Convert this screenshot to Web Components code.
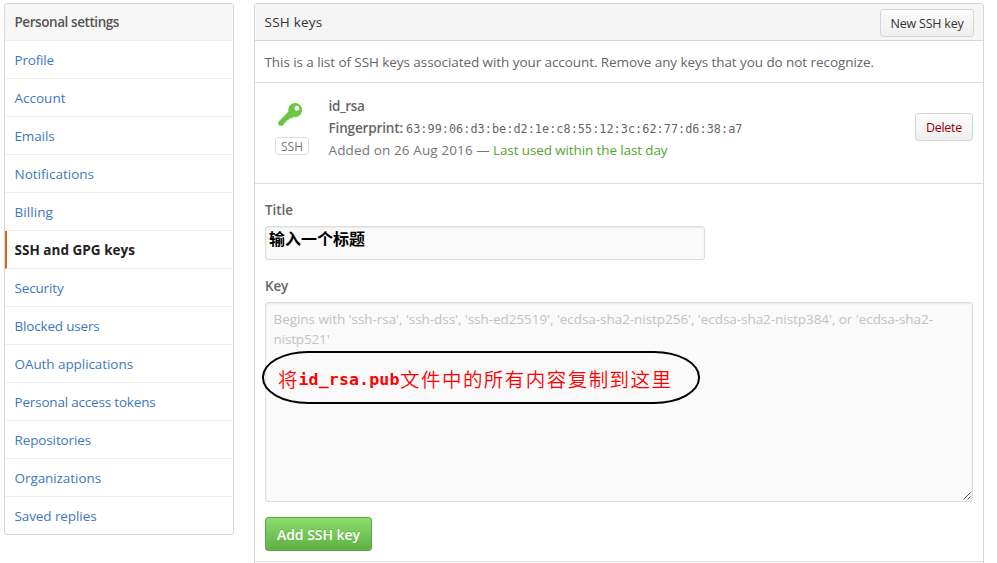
<!DOCTYPE html>
<html lang="en">
<head>
<meta charset="utf-8">
<title>SSH keys</title>
<style>
  html, body { margin: 0; background: #fff; }
  body { height: 563px; overflow: hidden; font: 13.5px/20px "Open Sans", "Noto Sans", sans-serif; color: #666; }
</style>
</head>
<body>
<settings-page>
  <side-menu slot="side" heading="Personal settings">
    <menu-entry><tracked-text width="39.5">Profile</tracked-text></menu-entry>
    <menu-entry><tracked-text width="51">Account</tracked-text></menu-entry>
    <menu-entry><tracked-text width="40">Emails</tracked-text></menu-entry>
    <menu-entry><tracked-text width="79.5">Notifications</tracked-text></menu-entry>
    <menu-entry><tracked-text width="38.5">Billing</tracked-text></menu-entry>
    <menu-entry current><tracked-text width="120.5">SSH and GPG keys</tracked-text></menu-entry>
    <menu-entry><tracked-text width="49">Security</tracked-text></menu-entry>
    <menu-entry><tracked-text width="85">Blocked users</tracked-text></menu-entry>
    <menu-entry><tracked-text width="118.5">OAuth applications</tracked-text></menu-entry>
    <menu-entry><tracked-text width="141">Personal access tokens</tracked-text></menu-entry>
    <menu-entry><tracked-text width="76.5">Repositories</tracked-text></menu-entry>
    <menu-entry><tracked-text width="86.5">Organizations</tracked-text></menu-entry>
    <menu-entry><tracked-text width="82">Saved replies</tracked-text></menu-entry>
  </side-menu>
  <keys-panel>
    <tracked-text slot="heading" width="58">SSH keys</tracked-text>
    <push-button slot="action" style="--w:94px"><tracked-text width="73">New SSH key</tracked-text></push-button>
    <tracked-text slot="intro" width="609.5">This is a list of SSH keys associated with your account. Remove any keys that you do not recognize.</tracked-text>
    <key-row slot="row"></key-row>
    <key-form slot="form"></key-form>
  </keys-panel>
</settings-page>

<script>
const define = (name, html, setup) => customElements.define(name, class extends HTMLElement {
  connectedCallback() {
    if (this.shadowRoot) return;
    this.attachShadow({ mode: 'open' }).innerHTML = html;
    if (setup) setup(this);
  }
});

define('settings-page', `
  <style>:host{display:grid;grid-template-columns:230px 730px;column-gap:20px;padding:3px 0 0 4px;align-items:start}</style>
  <slot name="side"></slot><slot></slot>`);

define('side-menu', `
  <style>
    :host{display:block;border:1px solid #d8d8d8;border-radius:3px;overflow:hidden}
    h2{margin:0;height:36px;padding-left:9.5px;background:#f7f7f7;border-bottom:1px solid #eee;font-size:13.5px;line-height:37px;font-weight:650;color:#555}
    ::slotted(menu-entry:last-child){--line:0px}
  </style>
  <h2><tracked-text width="104.5"></tracked-text></h2><slot></slot>`,
  el => el.shadowRoot.querySelector('tracked-text').textContent = el.getAttribute('heading'));

define('menu-entry', `
  <style>
    :host{display:block;height:37px;padding-left:9.5px;line-height:38px;color:#4078c0;border-bottom:var(--line,1px) solid #eee}
    :host([current]){font-weight:700;color:#222;padding-left:7.5px;border-left:2px solid #d26911}
  </style><slot></slot>`);

/* Text whose letter-spacing is tuned so that it spans a given width. */
define('tracked-text', `<style>:host{display:inline-block;white-space:nowrap}</style><slot></slot>`);

define('push-button', `
  <style>
    :host{display:block;box-sizing:border-box;width:var(--w);height:28px;border:1px solid #d5d5d5;border-radius:3px;
      background:linear-gradient(#fcfcfc,#eee);text-align:center;line-height:27px;font-size:12.5px;font-weight:500;color:#333}
    :host([danger]){color:#900}
    :host([primary]){height:34px;line-height:33px;font-size:14px;font-weight:600;color:#fff;border-color:#5ca941;
      background:linear-gradient(#8add6d,#60b044);text-shadow:0 -1px 0 rgba(0,0,0,.15)}
  </style><slot></slot>`);

define('keys-panel', `
  <style>
    :host{display:block;border:1px solid #d8d8d8;border-radius:3px 3px 0 0;height:570px;box-sizing:border-box}
    header{display:flex;justify-content:space-between;align-items:center;height:36px;padding:0 9px 0 9.5px;
      background:#f5f5f5;border-bottom:1px solid #d8d8d8;color:#333;font-weight:500;border-radius:2px 2px 0 0}
    ::slotted([slot=action]){position:relative;top:1px}
    p{margin:0;height:41px;padding-left:9.5px;line-height:42px;border-bottom:1px solid #ddd}
  </style>
  <header><slot name="heading"></slot><slot name="action"></slot></header>
  <p><slot name="intro"></slot></p><slot name="row"></slot><slot name="form"></slot>`);

define('key-row', `
  <style>
    :host{display:grid;grid-template-columns:34px 1fr 58px;column-gap:20px;height:88px;padding:12px 10px 0 20px;border-bottom:1px solid #ddd}
    .kind{display:flex;flex-direction:column;align-items:center;padding-top:8px;box-sizing:border-box}
    svg{display:block;width:24px;height:23px;margin-right:5px}
    .badge{box-sizing:border-box;width:34px;height:18px;margin-top:11px;border:1px solid #ddd;border-radius:3px;
      text-align:center;font-size:12px;line-height:17px;color:#767676}
    .text{margin-left:-.5px}
    .line{height:22px;line-height:23px;display:flex;align-items:baseline}
    b{font-weight:550} code{font:11.8px/22px "DejaVu Sans Mono",monospace;margin-left:3px}
    .meta{color:#767676}.used{color:#55a532;margin-left:3px}
    push-button{margin-top:18px}
  </style>
  <div class="kind">
    <svg viewBox="0 1 14 13.2" preserveAspectRatio="none"><path fill="#6cc644" fill-rule="evenodd" d="M12.83 2.17C12.08 1.42 11.14 1.03 10 1c-1.13.03-2.08.42-2.83 1.17S6.04 3.86 6.01 5c0 .3.03.59.09.89L.4 11.6C-.1 12.1 0 12.6.1 13c.3.7.8 1.1 1.5 1.1h.9c.6-.1.8-.4 1-.9l.3-.8.9-.3.3-1 1.1-.3.4-.9 1.5-.1L9.09 8.89c.3.08.59.11.91.11 1.14-.03 2.08-.42 2.83-1.17S13.97 6.14 14 5c-.03-1.14-.42-2.08-1.17-2.83zM11 5.38c-.77 0-1.38-.61-1.38-1.38 0-.77.61-1.38 1.38-1.38.77 0 1.38.61 1.38 1.38 0 .77-.61 1.38-1.38 1.38z"/></svg>
    <span class="badge"><tracked-text width="22">SSH</tracked-text></span>
  </div>
  <div class="text">
    <div class="line"><b><tracked-text width="36">id_rsa</tracked-text></b></div>
    <div class="line"><b><tracked-text width="74.5">Fingerprint:</tracked-text></b><code><tracked-text width="336.5">63:99:06:d3:be:d2:1e:c8:55:12:3c:62:77:d6:38:a7</tracked-text></code></div>
    <div class="line meta"><tracked-text width="161.5">Added on 26 Aug 2016 —</tracked-text><span class="used"><tracked-text width="174.5">Last used within the last day</tracked-text></span></div>
  </div>
  <push-button danger style="--w:58px"><tracked-text width="36">Delete</tracked-text></push-button>`);

define('key-form', `
  <style>
    :host{display:block;padding:16px 10px 10px;height:351px;border-bottom:1px solid #ddd}
    label{display:block;font-weight:550;height:20px}
    .box{box-sizing:border-box;border:1px solid #ddd;border-radius:3px;background:#fafafa;box-shadow:inset 0 1px 2px rgba(0,0,0,.075)}
    .title{width:440px;height:34px;margin:6px 0 16px;padding-left:3px;color:#000;font:700 16px/23px "Noto Sans CJK SC",sans-serif}
    .key{position:relative;width:708px;height:200px;margin:6px 0 15px;padding:6px 7.5px;color:#c3c3c3}
    .key>tracked-text{display:block}
    .note{position:absolute;left:-4px;top:48px;width:438px;height:53px;box-sizing:border-box;border:2px solid #000;
      border-radius:46px/26px;padding-left:14px;color:#f00;display:flex;align-items:center;white-space:nowrap;
      font:350 19.5px/1 "Noto Sans CJK SC",sans-serif}
    .note>*{position:relative;top:1px}
    .note b{font:700 16.6px/1 "DejaVu Sans Mono",monospace;top:3px;left:1px}
    .note b+*{left:1.5px}
    .grip{position:absolute;right:1px;bottom:1px;width:8px;height:8px}
  </style>
  <label><tracked-text width="28">Title</tracked-text></label>
  <div class="box title"><tracked-text width="96">输入一个标题</tracked-text></div>
  <label><tracked-text width="23">Key</tracked-text></label>
  <div class="box key">
    <tracked-text width="659.5">Begins with 'ssh-rsa', 'ssh-dss', 'ssh-ed25519', 'ecdsa-sha2-nistp256', 'ecdsa-sha2-nistp384', or 'ecdsa-sha2-</tracked-text>
    <tracked-text width="56">nistp521'</tracked-text>
    <svg class="grip" viewBox="0 0 8 8"><path d="M.5 7.5l7-7M4.5 7.5l3-3" stroke="#555" fill="none"/></svg>
    <div class="note"><span>将</span><b><tracked-text width="101">id_rsa.pub</tracked-text></b><tracked-text width="272.5">文件中的所有内容复制到这里</tracked-text></div>
  </div>
  <push-button primary style="--w:107px"><tracked-text width="83">Add SSH key</tracked-text></push-button>`);

const track = root => root.querySelectorAll('*').forEach(el => {
  if (el.localName === 'tracked-text') {
    const range = document.createRange();
    range.selectNodeContents(el);
    const gap = el.getAttribute('width') - range.getBoundingClientRect().width;
    el.style.letterSpacing = (gap / el.textContent.length).toFixed(3) + 'px';
  }
  if (el.shadowRoot) track(el.shadowRoot);
});
track(document);
</script>
</body>
</html>
